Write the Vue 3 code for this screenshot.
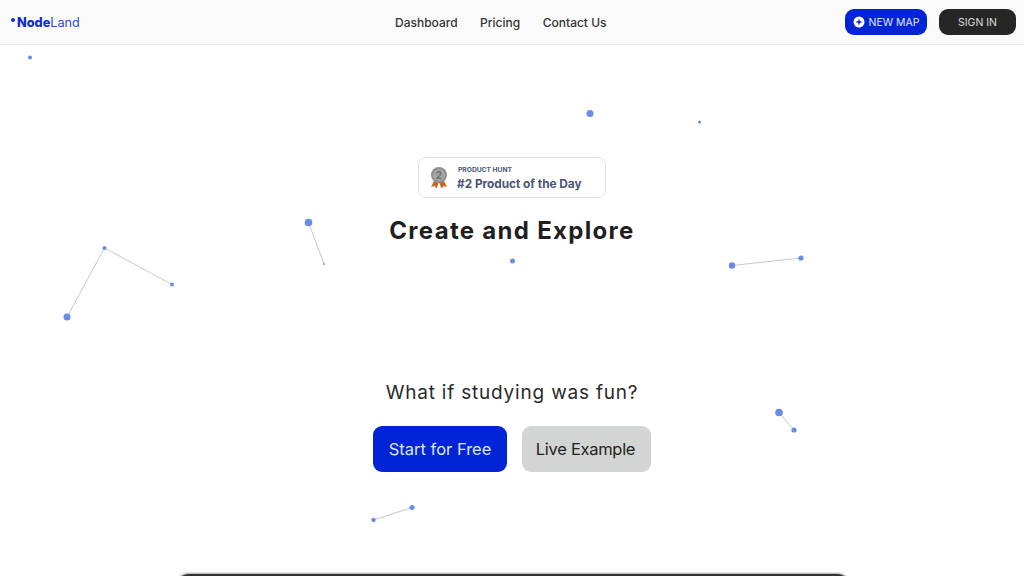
<script setup>
const navLinks = ['Dashboard', 'Pricing', 'Contact Us']

// nodes of the background graph, page coordinates
const dots = [
  { x: 30, y: 57.5, r: 2 }, { x: 590, y: 113.5, r: 3.5 }, { x: 699.5, y: 122, r: 1.5 },
  { x: 308.5, y: 222.5, r: 3.8 }, { x: 324, y: 264, r: 1 }, { x: 512.5, y: 261, r: 2.5 },
  { x: 104.5, y: 248, r: 2 }, { x: 172, y: 284.5, r: 2 }, { x: 67, y: 317, r: 3.5 },
  { x: 732, y: 265.5, r: 3.2 }, { x: 801, y: 258, r: 2.6 }, { x: 779, y: 412.5, r: 3.8 },
  { x: 794, y: 430, r: 2.6 }, { x: 412, y: 507.5, r: 2.5 }, { x: 373.5, y: 520, r: 2.2 }
]

const lines = [
  { x1: 308.5, y1: 222.5, x2: 324, y2: 264 },
  { x1: 104.5, y1: 248, x2: 172, y2: 284.5 },
  { x1: 104.5, y1: 248, x2: 67, y2: 317 },
  { x1: 732, y1: 265.5, x2: 801, y2: 258 },
  { x1: 779, y1: 412.5, x2: 794, y2: 430 },
  { x1: 412, y1: 507.5, x2: 373.5, y2: 520 }
]
</script>

<template>
  <div class="page">
    <svg class="graph" width="1024" height="576" viewBox="0 0 1024 576">
      <line v-for="(l, i) in lines" :key="i" :x1="l.x1" :y1="l.y1" :x2="l.x2" :y2="l.y2" class="edge" />
      <circle v-for="(d, i) in dots" :key="i" :cx="d.x" :cy="d.y" :r="d.r" class="node" />
    </svg>

    <header class="navbar">
      <a class="logo"><span class="logo-dot"></span><b>Node</b>Land</a>
      <nav class="nav-links">
        <a v-for="link in navLinks" :key="link">{{ link }}</a>
      </nav>
      <div class="nav-actions">
        <button class="btn-new">
          <svg width="12" height="12" viewBox="0 0 12 12">
            <circle cx="6" cy="6" r="5.5" fill="#fff" />
            <path d="M6 3.500v5M3.500 6h5" stroke="#0024d6" stroke-width="1.3" />
          </svg>
          NEW MAP
        </button>
        <button class="btn-sign">SIGN IN</button>
      </div>
    </header>

    <main class="hero">
      <div class="badge">
        <svg class="medal" width="18" height="22" viewBox="0 0 18 22">
          <path d="M5 12 1 20l3.500-1 2 2.500L9 15l2.500 6.500 2-2.500 3.500 1-4-8z" fill="#c9661f" />
          <circle cx="9" cy="8" r="8" fill="#8f8f8f" />
          <circle cx="9" cy="8" r="6" fill="#a5a5a5" />
          <text x="9" y="11.500" text-anchor="middle" class="medal-num">2</text>
        </svg>
        <div class="badge-text">
          <span class="badge-top">PRODUCT HUNT</span>
          <span class="badge-main">#2 Product of the Day</span>
        </div>
      </div>
      <h1>Create and Explore</h1>
      <p class="tagline">What if studying was fun?</p>
      <div class="cta">
        <button class="btn-start">Start for Free</button>
        <button class="btn-live">Live Example</button>
      </div>
      <div class="preview"></div>
    </main>
  </div>
</template>

<style scoped>
.page {
  position: relative;
  width: 1024px;
  height: 576px;
  overflow: hidden;
  background: #fff;
  font-family: Inter, "Liberation Sans", sans-serif;
  color: #222;
}

.graph {
  position: absolute;
  top: 0;
  left: 0;
}

.edge {
  stroke: #c6c8cc;
  stroke-width: 1;
}

.node {
  fill: #6a8be6;
}

.navbar {
  position: relative;
  display: grid;
  grid-template-columns: 384px auto 1fr;
  align-items: center;
  height: 44px;
  padding: 0 8px 0 11px;
  background: #fafafa;
  border-bottom: 1px solid #ececec;
}

.logo {
  display: flex;
  align-items: center;
  font-size: 12.700px;
  color: #2f49d8;
}

.logo b {
  font-weight: 800;
  color: #0f2bd6;
}

.logo-dot {
  width: 4px;
  height: 4px;
  margin: 0 2px 5px 0;
  border-radius: 50%;
  background: #0f2bd6;
}

.nav-links {
  display: flex;
  gap: 22.500px;
  font-size: 12px;
  font-weight: 500;
  color: #333;
}

.nav-actions {
  display: flex;
  justify-content: flex-end;
  gap: 12px;
}

.nav-actions button {
  display: flex;
  align-items: center;
  justify-content: center;
  gap: 4px;
  height: 26px;
  border: none;
  border-radius: 9px;
  font-family: inherit;
  font-size: 10.500px;
}

.btn-new {
  width: 82px;
  background: #0024d6;
  color: #e4e8fb;
}

.btn-sign {
  width: 77px;
  background: #262626;
  color: #ddd;
}

.hero {
  position: relative;
  display: flex;
  flex-direction: column;
  align-items: center;
  padding-top: 112px;
}

.badge {
  display: flex;
  align-items: center;
  gap: 9px;
  box-sizing: border-box;
  width: 188px;
  height: 41px;
  padding: 0 11px;
  border: 1px solid #e2e2e2;
  border-radius: 8px;
  background: #fff;
}

.medal {
  flex: none;
}

.medal-num {
  font-size: 10px;
  font-weight: 700;
  fill: #6f6f6f;
}

.badge-text {
  display: flex;
  flex-direction: column;
  gap: 2px;
  padding-top: 2px;
  color: #4a5578;
}

.badge-top {
  margin-left: 1px;
  font-size: 6.700px;
  font-weight: 700;
  line-height: 9px;
}

.badge-main {
  font-size: 11.800px;
  font-weight: 700;
  line-height: 15px;
  white-space: nowrap;
}

h1 {
  margin: 18px 0 0;
  font-size: 24px;
  line-height: 30px;
  font-weight: 700;
  letter-spacing: 1.300px;
  color: #1f1f1f;
}

.tagline {
  margin: 134px 0 0;
  font-size: 19px;
  line-height: 26px;
  letter-spacing: 0.8px;
  color: #2a2a2a;
}

.cta {
  display: flex;
  gap: 15px;
  margin-top: 20px;
}

.cta button {
  height: 46px;
  border: none;
  border-radius: 9px;
  font-family: inherit;
  font-size: 16.500px;
}

.btn-start {
  width: 134px;
  background: #0024d6;
  color: #dfe4fa;
}

.btn-live {
  width: 129px;
  padding-right: 8px;
  background: #d3d5d4;
  color: #222;
  letter-spacing: -0.3px;
}

.preview {
  flex: none;
  width: 676px;
  height: 60px;
  margin: 102px 0 0 2px;
  border-radius: 14px 14px 0 0;
  background: #333;
  box-shadow: 0 -1px 2px rgba(0, 0, 0, 0.35);
}
</style>
